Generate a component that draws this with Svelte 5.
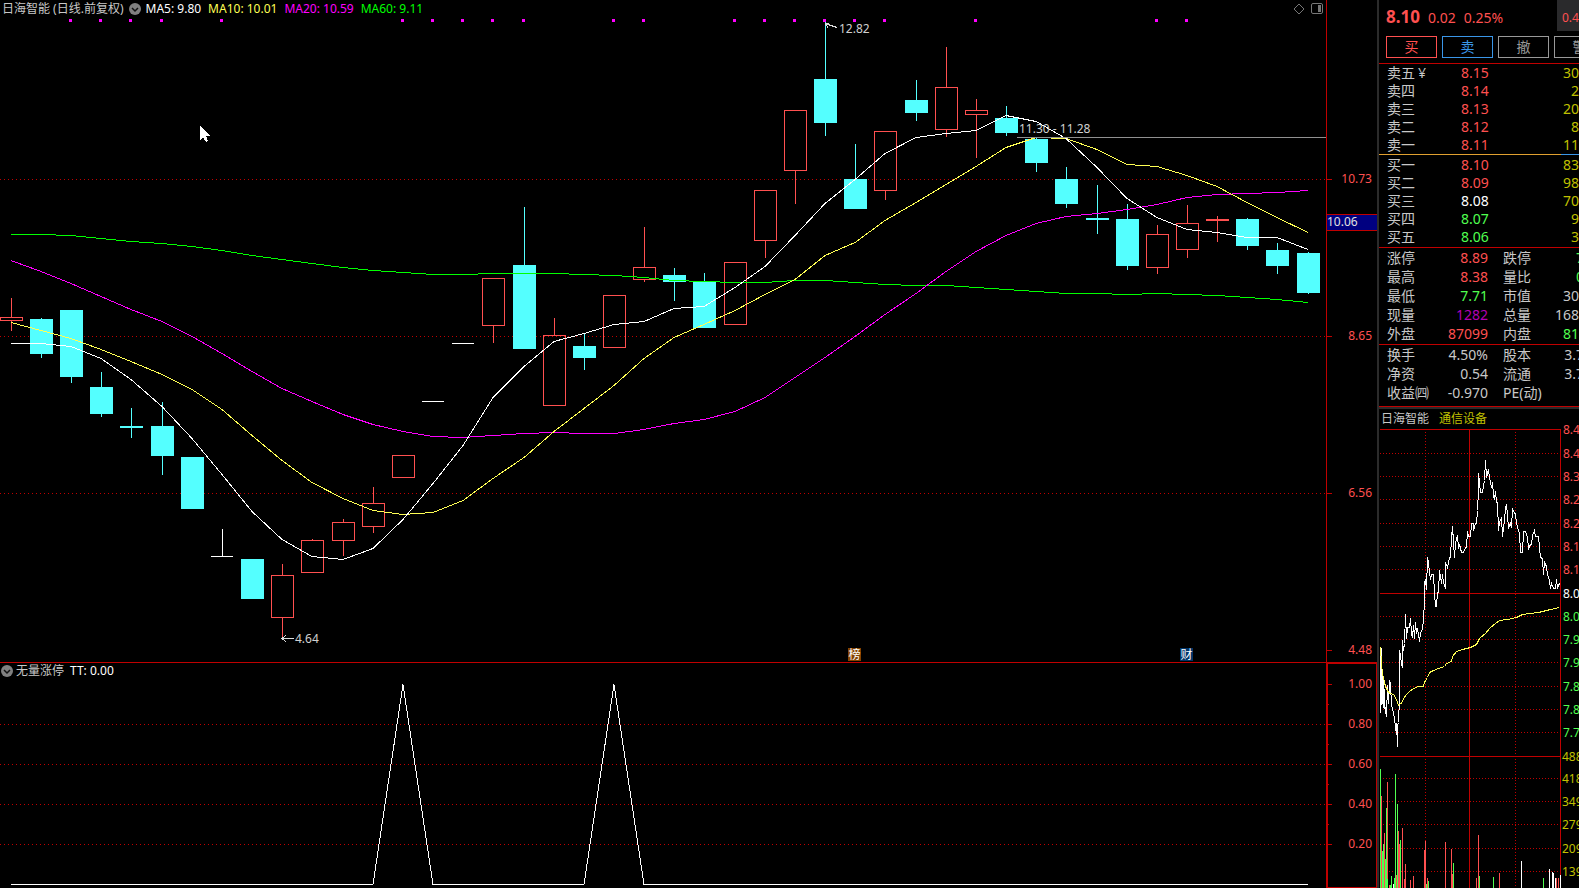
<script>
	const BASE_WIDTH = 1326;

	// Width of the plot area, updated when the window is resized
	let plotWidth = BASE_WIDTH;

	// [x, high, body top, body bottom, low, type]
	const candles = [
		[11, 298, 317, 321, 331, 'up'],
		[41, 318, 319, 354, 358, 'down'],
		[71, 310, 310, 377, 383, 'down'],
		[101, 372, 387, 414, 417, 'down'],
		[131, 408, 426, 428, 438, 'down'],
		[162, 402, 426, 456, 475, 'down'],
		[192, 457, 457, 509, 509, 'down'],
		[222, 529, 556, 557, 557, 'flat'],
		[252, 559, 559, 599, 599, 'down'],
		[282, 564, 575, 618, 638, 'up'],
		[312, 539, 540, 573, 573, 'up'],
		[343, 519, 522, 541, 556, 'up'],
		[373, 487, 503, 527, 533, 'up'],
		[403, 455, 455, 478, 478, 'up'],
		[433, 401, 401, 402, 402, 'flat'],
		[463, 343, 343, 344, 344, 'flat'],
		[493, 278, 278, 326, 343, 'up'],
		[524, 207, 265, 349, 349, 'down'],
		[554, 318, 335, 406, 406, 'up'],
		[584, 334, 346, 358, 370, 'down'],
		[614, 295, 295, 348, 348, 'up'],
		[644, 227, 267, 280, 282, 'up'],
		[674, 268, 275, 282, 301, 'down'],
		[704, 273, 281, 328, 328, 'down'],
		[735, 262, 262, 325, 325, 'up'],
		[765, 190, 190, 241, 258, 'up'],
		[795, 110, 110, 171, 204, 'up'],
		[825, 22, 79, 123, 136, 'down'],
		[855, 144, 179, 209, 209, 'down'],
		[885, 131, 131, 191, 200, 'up'],
		[916, 80, 100, 113, 121, 'down'],
		[946, 47, 87, 130, 137, 'up'],
		[976, 99, 110, 115, 158, 'up'],
		[1006, 106, 118, 133, 136, 'down'],
		[1036, 137, 139, 163, 172, 'down'],
		[1066, 167, 179, 204, 208, 'down'],
		[1097, 185, 218, 220, 234, 'down'],
		[1127, 204, 219, 266, 270, 'down'],
		[1157, 225, 234, 268, 274, 'up'],
		[1187, 205, 223, 250, 258, 'up'],
		[1217, 216, 219, 221, 242, 'up'],
		[1247, 218, 219, 246, 250, 'down'],
		[1277, 243, 250, 266, 274, 'down'],
		[1308, 252, 253, 293, 294, 'down']
	];

	// One value for each candle
	const averages = [
		{
			name: 'ma60',
			label: 'MA60: 9.11',
			values: [
				234, 234, 235, 238, 241, 243, 246, 250, 255, 259, 263, 267, 270, 272, 274, 274, 273, 273, 273,
				274, 275, 277, 280, 281, 282, 282, 280, 280, 282, 284, 285, 285, 287, 289, 291, 293, 293, 294,
				293, 294, 295, 297, 299, 302
			]
		},
		{
			name: 'ma20',
			label: 'MA20: 10.59',
			values: [
				260, 271, 283, 296, 309, 321, 336, 353, 371, 388, 401, 414, 424, 431, 436, 437, 435, 433, 432,
				433, 433, 429, 423, 419, 411, 397, 377, 357, 336, 314, 293, 271, 251, 235, 223, 216, 213, 209,
				204, 197, 194, 193, 192, 190
			]
		},
		{
			name: 'ma10',
			label: 'MA10: 10.01',
			values: [
				322, 330, 338, 349, 361, 374, 389, 409, 435, 460, 482, 498, 510, 514, 512, 500, 478, 457, 431,
				408, 385, 358, 337, 324, 310, 294, 279, 255, 242, 220, 202, 184, 166, 147, 137, 138, 149, 164,
				166, 175, 186, 202, 217, 232
			]
		},
		{
			name: 'ma5',
			label: 'MA5: 9.80',
			values: [
				343, 343, 346, 358, 379, 406, 438, 474, 511, 539, 556, 559, 548, 519, 483, 445, 397, 366, 341,
				333, 324, 321, 308, 306, 287, 266, 235, 203, 179, 153, 137, 133, 130, 115, 121, 138, 167, 198,
				217, 229, 232, 237, 237, 249
			]
		}
	];
	const legend = [...averages].reverse();

	// Candles marked with a dot at the top of the plot
	const marked = [2, 3, 4, 5, 7, 13, 14, 15, 16, 17, 20, 21, 24, 25, 26, 27, 28, 29, 32, 38, 39];

	const priceTicks = [
		{ y: 179, label: '10.73' },
		{ y: 336, label: '8.65' },
		{ y: 493, label: '6.56' },
		{ y: 650, label: '4.48' }
	];

	const signalTicks = [
		{ y: 20, label: '1.00' },
		{ y: 60, label: '0.80' },
		{ y: 100, label: '0.60' },
		{ y: 140, label: '0.40' },
		{ y: 180, label: '0.20' }
	];

	const signal = [
		[11, 205],
		[373, 205],
		[403, 5],
		[433, 205],
		[584, 205],
		[614, 5],
		[644, 205],
		[1308, 205]
	];

	const events = [
		{ x: 848, label: '榜', type: 'rank' },
		{ x: 1180, label: '财', type: 'report' }
	];

	const actions = [
		{ label: '买', type: 'buy' },
		{ label: '卖', type: 'sell' },
		{ label: '撤', type: 'plain' },
		{ label: '警', type: 'plain' }
	];

	const asks = [
		['卖五', '8.15', '30', 'rise'],
		['卖四', '8.14', '2', 'rise'],
		['卖三', '8.13', '20', 'rise'],
		['卖二', '8.12', '8', 'rise'],
		['卖一', '8.11', '11', 'rise']
	];

	const bids = [
		['买一', '8.10', '83', 'rise'],
		['买二', '8.09', '98', 'rise'],
		['买三', '8.08', '70', 'even'],
		['买四', '8.07', '9', 'fall'],
		['买五', '8.06', '3', 'fall']
	];

	// [label, value, color, label, value, color, value runs past the edge]
	const trading = [
		['涨停', '8.89', 'rise', '跌停', '7', 'fall', true],
		['最高', '8.38', 'rise', '量比', '0', 'fall', true],
		['最低', '7.71', 'fall', '市值', '30', ''],
		['现量', '1282', 'now', '总量', '168', ''],
		['外盘', '87099', 'rise', '内盘', '81', 'fall']
	];

	const finance = [
		['换手', '4.50%', '', '股本', '3.7', '', true],
		['净资', '0.54', '', '流通', '3.7', '', true],
		['收益㈣', '-0.970', '', 'PE(动)', '', '']
	];

	const dayTicks = [
		[0, '8.4', 'rise'],
		[24, '8.4', 'rise'],
		[47, '8.3', 'rise'],
		[70, '8.2', 'rise'],
		[94, '8.2', 'rise'],
		[117, '8.1', 'rise'],
		[140, '8.1', 'rise'],
		[164, '8.0', 'even'],
		[187, '8.0', 'fall'],
		[210, '7.9', 'fall'],
		[233, '7.9', 'fall'],
		[257, '7.8', 'fall'],
		[280, '7.8', 'fall'],
		[303, '7.7', 'fall'],
		[327, '488', 'vol'],
		[349, '418', 'vol'],
		[372, '349', 'vol'],
		[395, '279', 'vol'],
		[419, '209', 'vol'],
		[442, '139', 'vol']
	];
	const solidTicks = [0, 164, 327];

	const dayPrice =
		'1,219 1,283 2,219 2,275 3,244 3,274 4,251 4,278 5,260 5,274 6,284 7,271 7,287 8,256 9,274 10,251 11,254 12,276 14,283 15,289 16,298 17,304 17,294 18,317 18,296 19,293 20,269 20,276 20,221 21,226 22,234 23,238 23,211 24,221 25,214 26,185 27,209 28,198 30,198 31,189 32,204 33,208 34,196 35,209 36,193 37,204 38,199 40,212 41,204 43,199 44,191 45,171 45,153 46,151 47,160 48,128 49,133 50,143 51,150 52,145 54,145 55,164 56,177 57,177 58,163 59,163 60,141 62,154 63,145 64,153 66,159 66,133 68,138 70,128 71,128 72,108 73,97 75,128 76,113 78,106 79,119 80,115 81,119 82,123 84,123 86,118 87,118 88,102 89,107 91,107 92,94 94,94 94,101 96,94 97,94 98,81 99,61 99,44 100,53 101,63 103,63 104,56 105,51 106,31 107,48 109,40 110,48 112,58 113,53 114,66 115,70 116,62 117,73 118,73 119,101 120,93 122,88 123,107 125,91 126,78 127,75 128,86 129,98 131,94 132,98 133,79 135,84 136,84 137,94 140,104 141,123 143,123 144,102 146,102 148,108 149,119 151,115 152,115 153,106 155,101 156,107 159,107 160,118 161,128 163,129 164,145 165,133 167,137 168,145 170,151 171,159 172,154 174,159 176,159 177,150 178,158 180,154';

	const dayAverage =
		'1,218 2,234 3,245 4,248 5,253 6,257 8,261 9,263 11,264 14,265 16,268 18,273 19,276 21,274 23,273 24,269 27,265 30,262 34,259 39,257 44,257 45,253 48,248 50,243 54,241 59,239 65,237 67,234 72,232 73,227 77,222 83,220 91,218 97,215 100,209 106,204 111,198 116,194 120,191 128,190 137,188 143,185 159,183 171,180 180,178';

	// [x, top, color]
	const volumes = [
		[1, 340, 'g'],
		[2, 367, 'r'],
		[3, 422, 'g'],
		[4, 415, 'g'],
		[5, 404, 'r'],
		[6, 430, 'g'],
		[7, 379, 'g'],
		[8, 353, 'r'],
		[8, 450, 'g'],
		[10, 456, 'r'],
		[11, 456, 'g'],
		[12, 447, 'g'],
		[14, 455, 'w'],
		[15, 449, 'g'],
		[16, 345, 'g'],
		[17, 446, 'r'],
		[18, 375, 'g'],
		[19, 402, 'r'],
		[20, 415, 'r'],
		[21, 411, 'g'],
		[23, 399, 'r'],
		[25, 450, 'r'],
		[26, 435, 'r'],
		[31, 451, 'r'],
		[34, 447, 'r'],
		[45, 421, 'r'],
		[46, 412, 'r'],
		[47, 455, 'g'],
		[48, 449, 'r'],
		[49, 452, 'g'],
		[66, 413, 'r'],
		[72, 420, 'r'],
		[73, 445, 'r'],
		[74, 434, 'g'],
		[97, 449, 'r'],
		[99, 406, 'r'],
		[100, 447, 'g'],
		[114, 448, 'g'],
		[120, 444, 'r'],
		[142, 432, 'w'],
		[164, 449, 'g'],
		[170, 440, 'w'],
		[173, 443, 'w'],
		[174, 444, 'w'],
		[176, 449, 'w'],
		[177, 449, 'r'],
		[179, 449, 'r'],
		[181, 446, 'w']
	];

	// Spread the candles over the current width
	$: px = (x) => Math.round((x * plotWidth) / BASE_WIDTH);

	$: linePoints = (values) => values.map((y, i) => `${px(candles[i][0])},${y + 0.5}`).join(' ');

	$: signalPoints = signal.map(([x, y]) => `${px(x)},${y + 0.5}`).join(' ');
</script>

<div class="terminal">
	<main>
		<section class="pane" bind:clientWidth={plotWidth}>
			<header>
				<h1>日海智能 (日线.前复权)</h1>
				<button class="toggle" aria-label="指标菜单">
					<svg viewBox="0 0 12 12">
						<circle cx="6" cy="6" r="6" />
						<path d="M3 5l3 3 3-3" />
					</svg>
				</button>
				<ul>
					{#each legend as ma}
						<li class={ma.name}>{ma.label}</li>
					{/each}
				</ul>
				<div class="tools">
					<button aria-label="标记">
						<svg viewBox="0 0 12 12"><path d="M6 1l5 5-5 5-5-5z" /></svg>
					</button>
					<button aria-label="侧栏">
						<svg viewBox="0 0 12 12">
							<rect x="0.5" y="0.5" width="11" height="10" rx="1.5" />
							<path class="fill" d="M7 2h3v7H7z" />
						</svg>
					</button>
				</div>
			</header>

			<svg class="plot price" viewBox={`0 18 ${plotWidth} 644`} preserveAspectRatio="none">
				<g class="grid">
					{#each priceTicks.slice(0, 3) as tick}
						<line x1="0" x2={plotWidth} y1={tick.y + 0.5} y2={tick.y + 0.5} />
					{/each}
				</g>

				{#each marked as i}
					<rect class="dot" x={px(candles[i][0]) - 2} y="19" width="3" height="3" />
				{/each}

				{#each candles as [x, high, top, bottom, low, type]}
					<g class={type}>
						<rect class="wick" x={px(x)} y={high} width="1" height={top - high} />
						<rect class="wick" x={px(x)} y={bottom} width="1" height={low - bottom} />
						{#if type === 'up'}
							<rect class="body" x={px(x) - 10.5} y={top + 0.5} width="22" height={bottom - top - 1} />
						{:else}
							<rect class="body" x={px(x) - 11} y={top} width={type === 'flat' ? 22 : 23} height={bottom - top} />
						{/if}
					</g>
				{/each}

				{#each averages as ma}
					<polyline class={ma.name} points={linePoints(ma.values)} />
				{/each}

				<g class="note">
					<line x1={px(1017)} x2={plotWidth} y1="137.5" y2="137.5" />
					<text x={px(1017) + 2} y="133">11.30 - 11.28</text>
					<path d={`M${px(825)} 23.5h4M${px(825)} 23.5l3 4M${px(825)} 23.5l12 4`} />
					<text x={px(825) + 14} y="33">12.82</text>
					<path d={`M${px(282)} 638.5h12M${px(282) + 4} 635.5l-4 3 4 3`} />
					<text x={px(282) + 13} y="643">4.64</text>
				</g>

				{#each events as event}
					<g class={event.type}>
						<path d={`M${px(event.x)} 648h12l1 1v12h-13z`} />
						<text x={px(event.x) + 6.5} y="659">{event.label}</text>
					</g>
				{/each}

				<path class="cursor" d={`M${px(200)} 126v14l3-3 3 5 2-1-2-5h4z`} />
			</svg>
		</section>

		<svg class="axis" viewBox="0 0 51 662">
			<path d="M0.5 0v662" />
			{#each priceTicks as tick}
				<path d={`M0 ${tick.y + 0.5}h6`} />
				<text x="46" y={tick.y + 4}>{tick.label}</text>
			{/each}
			<rect x="1" y="214" width="50" height="17" />
			<path d="M1 214.5h50M1 230.5h50" />
			<text class="current" x="1" y="226">10.06</text>
		</svg>

		<section class="pane lower">
			<header>
				<button class="toggle" aria-label="指标菜单">
					<svg viewBox="0 0 12 12">
						<circle cx="6" cy="6" r="6" />
						<path d="M3 5l3 3 3-3" />
					</svg>
				</button>
				<h2>无量涨停</h2>
				<span class="ma5">TT: 0.00</span>
			</header>
			<svg class="plot signal" viewBox={`0 0 ${plotWidth} 209`} preserveAspectRatio="none">
				<g class="grid">
					{#each signalTicks.slice(1) as tick}
						<line x1="0" x2={plotWidth} y1={tick.y - 14.5} y2={tick.y - 14.5} />
					{/each}
				</g>
				<polyline class="ma5" points={signalPoints} />
			</svg>
		</section>

		<div class="axis-box">
			<svg class="axis" viewBox="0 0 48 223">
				{#each signalTicks as tick, i}
					<path d={`M0 ${tick.y + 0.5}h4`} />
					{#if i < 4}
						<path d={`M0 ${tick.y + 20.5}h1`} />
					{/if}
					<text x="44" y={tick.y + 4}>{tick.label}</text>
				{/each}
			</svg>
		</div>
	</main>

	<aside>
		<div class="quote">
			<strong>8.10</strong>
			<span>0.02</span>
			<span>0.25%</span>
			<div class="extra">0.4</div>
		</div>
		<div class="actions">
			{#each actions as action}
				<button class={action.type}>{action.label}</button>
			{/each}
		</div>

		<table class="book">
			<tbody>
				{#each asks as [label, price, amount, color], i}
					<tr>
						<th scope="row">{label}{#if i === 0}<span class="yen">¥</span>{/if}</th>
						<td class={color}>{price}</td>
						<td class="vol">{amount}</td>
					</tr>
				{/each}
			</tbody>
		</table>
		<div class="ratio"></div>
		<table class="book bids">
			<tbody>
				{#each bids as [label, price, amount, color]}
					<tr>
						<th scope="row">{label}</th>
						<td class={color}>{price}</td>
						<td class="vol">{amount}</td>
					</tr>
				{/each}
			</tbody>
		</table>

		{#each [trading, finance] as rows}
			<table class="stats">
				<tbody>
					{#each rows as [label, value, color, label2, value2, color2, over]}
						<tr>
							<th scope="row">{label}</th>
							<td class={color}>{value}</td>
							<th scope="row">{label2}</th>
							<td class={color2}><span class:over>{value2}</span></td>
						</tr>
					{/each}
				</tbody>
			</table>
		{/each}

		<div class="day-title">
			<span>日海智能</span>
			<a href="#sector">通信设备</a>
		</div>
		<svg class="day" viewBox="0 0 200 459">
			<g class="day-grid">
				{#each dayTicks as [y]}
					<line class:solid={solidTicks.includes(y)} x1="1" x2="181" y1={y + 0.5} y2={y + 0.5} />
				{/each}
				<line x1="46.5" x2="46.5" y1="0" y2="459" />
				<line class="solid" x1="90.5" x2="90.5" y1="0" y2="459" />
				<line x1="136.5" x2="136.5" y1="0" y2="459" />
				<line class="solid" x1="181.5" x2="181.5" y1="0" y2="459" />
			</g>
			{#each volumes as [x, y, color]}
				<rect class={color} {x} {y} width="1" height={459 - y} />
			{/each}
			<g transform="translate(0.5 0.5)">
				<polyline class="ma5" points={dayPrice} />
				<polyline class="ma10" points={dayAverage} />
			</g>
			{#each dayTicks as [y, label, color]}
				<text class={color} x={color === 'vol' ? 183 : 184} y={y + 5}>{label}</text>
			{/each}
		</svg>
	</aside>
</div>

<style>
	:global(body) {
		background: #000;
	}
	.terminal {
		--red: #c00000;
		--up: #ff5050;
		--down: #54ffff;
		--green: #50ff50;
		--text: #c8c8c8;
		display: grid;
		grid-template-columns: minmax(0, 1fr) 202px;
		min-height: 100vh;
		overflow: hidden;
		background: #000;
		color: var(--text);
		font-family: 'Noto Sans', 'Noto Sans CJK SC', sans-serif;
		font-size: 12px;
	}
	main {
		display: grid;
		grid-template-columns: minmax(0, 1fr) 51px;
		grid-template-rows: 662px 1fr;
	}
	button {
		padding: 0;
		border: 0;
		background: none;
		color: inherit;
		font: inherit;
	}
	svg {
		display: block;
	}

	/* Panes */
	.pane {
		min-width: 0;
		overflow: hidden;
	}
	.pane header {
		display: flex;
		align-items: center;
		height: 18px;
		padding: 0 3px 0 2px;
		line-height: 18px;
		white-space: nowrap;
	}
	.pane.lower {
		border-top: 1px solid var(--red);
	}
	.pane.lower header {
		height: 16px;
		padding-left: 1px;
		line-height: 16px;
	}
	h1,
	h2 {
		margin: 0;
		font-size: 12px;
		font-weight: 400;
	}
	h2 {
		margin: 0 6px 0 3px;
	}
	.toggle svg {
		width: 12px;
		height: 12px;
	}
	.toggle circle {
		fill: #808080;
	}
	.toggle path {
		fill: none;
		stroke: #111;
		stroke-width: 1.5;
	}
	h1 + .toggle {
		margin-left: 5px;
	}
	ul {
		display: flex;
		gap: 7px;
		margin: 0 0 0 5px;
		padding: 0;
		list-style: none;
	}
	.tools {
		display: flex;
		gap: 6px;
		margin-left: auto;
	}
	.tools svg {
		width: 12px;
		height: 12px;
		fill: none;
		stroke: #777;
	}
	.tools .fill {
		fill: #777;
		stroke: none;
	}

	/* Plots */
	.plot {
		width: 100%;
		shape-rendering: crispEdges;
	}
	.price {
		height: 644px;
	}
	.signal {
		height: 209px;
	}
	.grid line {
		stroke: var(--red);
		stroke-dasharray: 1 3;
	}
	.dot {
		fill: #f0f;
	}
	polyline {
		fill: none;
		stroke: currentColor;
	}
	.ma5 {
		color: #fff;
	}
	.ma10 {
		color: #ffff54;
	}
	.ma20 {
		color: #f0f;
	}
	.ma60 {
		color: #0f0;
	}
	.down rect {
		fill: var(--down);
	}
	.flat rect {
		fill: #fff;
	}
	.up .wick {
		fill: var(--up);
	}
	.up .body {
		fill: none;
		stroke: var(--up);
	}
	.note line {
		stroke: #909090;
	}
	.note path {
		fill: none;
		stroke: #ddd;
	}
	.note text {
		fill: #d0d0d0;
	}
	.rank path {
		fill: #844200;
	}
	.report path {
		fill: #003468;
	}
	.rank text,
	.report text {
		fill: #fff;
		text-anchor: middle;
	}
	.cursor {
		fill: #fff;
	}

	/* Axes */
	.axis {
		width: 51px;
		height: 662px;
	}
	.axis path {
		stroke: var(--red);
		shape-rendering: crispEdges;
	}
	.axis text {
		fill: var(--up);
		text-anchor: end;
	}
	.axis rect {
		fill: #000080;
	}
	.axis .current {
		fill: #e0e0e0;
		text-anchor: start;
	}
	.axis-box {
		border: solid var(--red);
		border-width: 2px 1px 1px 2px;
	}
	.axis-box .axis {
		width: 48px;
		height: 223px;
	}

	/* Quote panel */
	aside {
		min-width: 0;
		overflow: hidden;
		border-left: 2px solid #2b2b2b;
		font-size: 14px;
	}
	.rise {
		color: var(--up);
		fill: var(--up);
	}
	.fall {
		color: var(--green);
		fill: var(--green);
	}
	.even {
		color: #fff;
		fill: #fff;
	}
	.now {
		color: #b400b4;
	}
	.vol {
		color: #c0c000;
		fill: #c0c000;
	}
	.quote {
		display: flex;
		align-items: baseline;
		gap: 8px;
		height: 36px;
		padding-left: 7px;
		color: var(--up);
		line-height: 34px;
	}
	.quote strong {
		font-size: 17px;
	}
	.extra {
		box-sizing: border-box;
		width: 22px;
		height: 31px;
		margin-left: auto;
		padding-left: 5px;
		overflow: hidden;
		align-self: flex-start;
		background: #2a2a2c;
		font-size: 12px;
		line-height: 36px;
	}
	.actions {
		display: flex;
		gap: 5px;
		padding: 0 0 5px 7px;
		border-bottom: 1px solid var(--red);
	}
	.actions button {
		flex: none;
		box-sizing: border-box;
		width: 51px;
		height: 22px;
		border: 1px solid currentColor;
		line-height: 20px;
	}
	.buy {
		color: var(--up);
	}
	.sell {
		color: #3a96e8;
	}
	.plain {
		color: #999;
	}
	table {
		width: 100%;
		border-spacing: 0;
		table-layout: fixed;
	}
	th,
	td {
		padding: 0;
		font-weight: 400;
		text-align: left;
		white-space: nowrap;
	}
	.book th {
		width: 74px;
		padding-left: 8px;
	}
	.book tr {
		height: 18px;
		line-height: 18px;
	}
	.book .vol {
		text-align: right;
	}
	.yen {
		margin-left: 3px;
	}
	.ratio {
		height: 1px;
		background: linear-gradient(90deg, #e0a030 182px, #3a96e8 182px);
	}
	.bids {
		padding: 1px 0;
		border-bottom: 1px solid var(--red);
	}
	.stats {
		border-bottom: 1px solid var(--red);
	}
	.stats tr {
		height: 19px;
		line-height: 19px;
	}
	.stats th {
		width: 46px;
		padding-left: 8px;
	}
	.stats th + td {
		width: 55px;
		text-align: right;
	}
	.stats td + th {
		padding-left: 15px;
	}
	.stats td:last-child {
		width: auto;
	}
	.over {
		margin-right: -5px;
	}
	.stats:nth-of-type(3) {
		padding-bottom: 1px;
	}
	.stats:nth-of-type(4) {
		padding-bottom: 4px;
	}
	.day-title {
		display: flex;
		gap: 10px;
		height: 20px;
		padding-left: 2px;
		border-top: 2px solid #2b2b2b;
		font-size: 12px;
		line-height: 20px;
	}
	.day-title a {
		color: #c0c000;
		text-decoration: none;
	}
	.day {
		width: 200px;
		height: 459px;
		overflow: visible;
		font-size: 12px;
		shape-rendering: crispEdges;
	}
	.day-grid line {
		stroke: var(--red);
		stroke-dasharray: 1 2;
	}
	.day-grid .solid {
		stroke-dasharray: none;
	}
	.g {
		fill: var(--green);
	}
	.r {
		fill: var(--up);
	}
	.w {
		fill: #fff;
	}
</style>
